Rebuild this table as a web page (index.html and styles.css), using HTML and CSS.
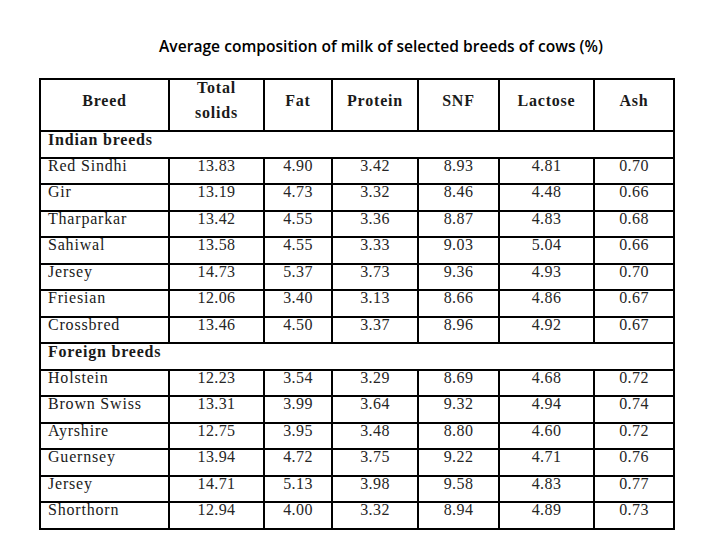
FILE: index.html
```html
<!DOCTYPE html>
<html>
<head>
<meta charset="utf-8">
<link rel="stylesheet" href="styles.css">
</head>
<body>
<div class="page">
  <h1 class="title">Average composition of milk of selected breeds of cows (%)</h1>
  <table class="milk">
    <colgroup>
      <col class="c1"><col class="c2"><col class="c3"><col class="c4"><col class="c5"><col class="c6"><col class="c7">
    </colgroup>
    <thead>
      <tr class="head">
        <th>Breed</th><th><div class="two">Total<br>solids</div></th><th>Fat</th><th>Protein</th><th>SNF</th><th>Lactose</th><th>Ash</th>
      </tr>
    </thead>
    <tbody>
      <tr class="group"><td colspan="7">Indian breeds</td></tr>
      <tr><td>Red Sindhi</td><td>13.83</td><td>4.90</td><td>3.42</td><td>8.93</td><td>4.81</td><td>0.70</td></tr>
      <tr><td>Gir</td><td>13.19</td><td>4.73</td><td>3.32</td><td>8.46</td><td>4.48</td><td>0.66</td></tr>
      <tr><td>Tharparkar</td><td>13.42</td><td>4.55</td><td>3.36</td><td>8.87</td><td>4.83</td><td>0.68</td></tr>
      <tr><td>Sahiwal</td><td>13.58</td><td>4.55</td><td>3.33</td><td>9.03</td><td>5.04</td><td>0.66</td></tr>
      <tr><td>Jersey</td><td>14.73</td><td>5.37</td><td>3.73</td><td>9.36</td><td>4.93</td><td>0.70</td></tr>
      <tr><td>Friesian</td><td>12.06</td><td>3.40</td><td>3.13</td><td>8.66</td><td>4.86</td><td>0.67</td></tr>
      <tr><td>Crossbred</td><td>13.46</td><td>4.50</td><td>3.37</td><td>8.96</td><td>4.92</td><td>0.67</td></tr>
      <tr class="group"><td colspan="7">Foreign breeds</td></tr>
      <tr><td>Holstein</td><td>12.23</td><td>3.54</td><td>3.29</td><td>8.69</td><td>4.68</td><td>0.72</td></tr>
      <tr><td>Brown Swiss</td><td>13.31</td><td>3.99</td><td>3.64</td><td>9.32</td><td>4.94</td><td>0.74</td></tr>
      <tr><td>Ayrshire</td><td>12.75</td><td>3.95</td><td>3.48</td><td>8.80</td><td>4.60</td><td>0.72</td></tr>
      <tr><td>Guernsey</td><td>13.94</td><td>4.72</td><td>3.75</td><td>9.22</td><td>4.71</td><td>0.76</td></tr>
      <tr><td>Jersey</td><td>14.71</td><td>5.13</td><td>3.98</td><td>9.58</td><td>4.83</td><td>0.77</td></tr>
      <tr><td>Shorthorn</td><td>12.94</td><td>4.00</td><td>3.32</td><td>8.94</td><td>4.89</td><td>0.73</td></tr>
    </tbody>
  </table>
</div>
</body>
</html>
```

FILE: styles.css
```css
html, body {
  margin: 0;
  padding: 0;
  background: #ffffff;
}

.page {
  width: 720px;
  height: 540px;
  overflow: hidden;
  padding: 36px 0 0 39px;
  box-sizing: border-box;
}

.title {
  margin: 0 0 22px 0;
  padding-left: 25px;
  width: 634px;
  text-align: center;
  white-space: nowrap;
  font-family: "Open Sans", "Liberation Sans", sans-serif;
  font-size: 15.6px;
  font-weight: 600;
  line-height: 20px;
  color: #000;
}

.milk {
  border-collapse: collapse;
  table-layout: fixed;
  width: 635px;
  font-family: "Liberation Serif", "Times New Roman", serif;
  font-size: 16px;
  color: #262626;
}

.c1 { width: 129px; }
.c2 { width: 95px; }
.c3 { width: 68px; }
.c4 { width: 86px; }
.c5 { width: 81px; }
.c6 { width: 95px; }
.c7 { width: 80px; }

.milk th,
.milk td {
  border: 2px solid #000;
  padding: 0;
  text-align: center;
}

.milk th {
  font-weight: bold;
  line-height: 25px;
  padding-bottom: 10px;
  vertical-align: middle;
  letter-spacing: 0.8px;
  color: #1a1a1a;
}

.two {
  margin: -5px 0;
}

.head {
  height: 51px;
}

.milk tbody tr {
  height: 26.5px;
}

.milk td {
  vertical-align: top;
  line-height: 12px;
  padding-top: 1px;
  letter-spacing: 0.4px;
}

.milk td:first-child {
  text-align: left;
  padding-left: 7px;
  letter-spacing: 0.8px;
  color: #1a1a1a;
}

.group td {
  padding-top: 2px;
  font-weight: bold;
  letter-spacing: 1px;
  color: #111;
}
```
